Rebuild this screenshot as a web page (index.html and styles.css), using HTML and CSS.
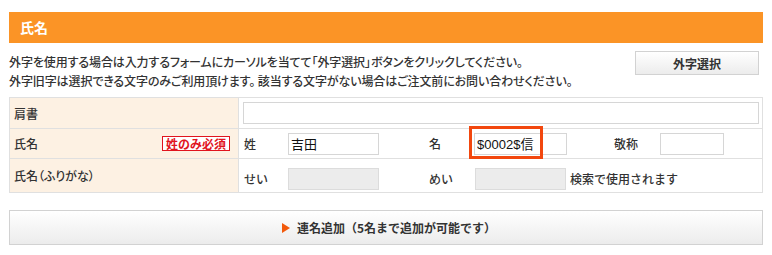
FILE: index.html
```html
<!DOCTYPE html>
<html lang="ja">
<head>
<meta charset="utf-8">
<title>氏名</title>
<link rel="stylesheet" href="styles.css">
</head>
<body>
<div class="page">
  <h2 class="section-title">氏名</h2>
  <div class="intro">
    <p class="intro-text">外字を使用する場合は入力するフォームにカーソルを当てて「外字選択」ボタンをクリックしてください。<br>外字旧字は選択できる文字のみご利用頂けます。 該当する文字がない場合はご注文前にお問い合わせください。</p>
    <button class="btn btn-gaiji" type="button">外字選択</button>
  </div>
  <div class="form">
    <div class="label">肩書</div>
    <div class="cell cell-title"><input class="field field-wide" type="text"></div>

    <div class="label label-name">氏名<span class="badge">姓のみ必須</span></div>
    <div class="cell cell-grid">
      <span class="sub">姓</span>
      <span class="slot"><input class="field field-m" type="text" value="吉田"></span>
      <span class="sub">名</span>
      <span class="slot"><span class="mark-wrap"><input class="field field-m2" type="text" value="$0002$信"><span class="mark"></span></span></span>
      <span class="sub">敬称</span>
      <span class="slot"><input class="field field-s" type="text"></span>
    </div>

    <div class="label label-kana">氏名（ふりがな）</div>
    <div class="cell cell-grid cell-kana">
      <span class="sub">せい</span>
      <span class="slot"><input class="field field-m field-off" type="text" disabled></span>
      <span class="sub">めい</span>
      <span class="slot slot-wide"><input class="field field-m field-off field-mei" type="text" disabled><span class="note">検索で使用されます</span></span>
    </div>
  </div>
  <button class="btn btn-add" type="button"><span class="tri"></span>連名追加（5名まで追加が可能です）</button>
</div>
</body>
</html>
```
FILE: styles.css
```css
* { box-sizing: border-box; }
html, body { margin: 0; padding: 0; background: #fff; }
body {
  font-family: "Noto Sans CJK JP", "Noto Sans", sans-serif;
  color: #333;
  font-size: 12px;
}
.page {
  width: 754px;
  margin-left: 9px;
  padding-top: 12px;
}
.section-title {
  margin: 0;
  height: 31px;
  line-height: 31px;
  background: #fb9426;
  color: #fff;
  font-size: 14px;
  font-weight: bold;
  padding-left: 11px;
}
.intro {
  display: flex;
  justify-content: space-between;
  align-items: flex-start;
  padding-top: 9px;
  height: 54px;
}
.intro-text {
  margin: 0;
  line-height: 19px;
  font-size: 12px;
  font-weight: 500;
  color: #333;
  font-feature-settings: "palt";
  letter-spacing: -0.1px;
}
.btn {
  font-family: "Noto Sans CJK JP", "Noto Sans", sans-serif;
  font-weight: bold;
  color: #333;
  background: linear-gradient(#ffffff, #ececec);
  border: 1px solid #d2d2d2;
  cursor: pointer;
}
.btn-gaiji {
  width: 124px;
  height: 24px;
  margin-top: -1px;
  margin-right: 4px;
  font-size: 12px;
  padding: 0;
}
.form {
  display: grid;
  grid-template-columns: 229px 1fr;
  grid-template-rows: 31px 30px 34px;
  border: 1px solid #e0e0e0;
  border-bottom: none;
}
.label {
  background: #fdf1e3;
  border-right: 1px solid #e0e0e0;
  border-bottom: 1px solid #e0e0e0;
  padding: 0 8px 0 4px;
  display: flex;
  align-items: center;
  font-weight: 500;
  font-size: 12px;
  color: #333;
  font-feature-settings: "palt";
}
.label-name { justify-content: space-between; }
.badge {
  color: #e1141e;
  border: 1px solid #e1141e;
  background: #fff;
  font-size: 12px;
  height: 15px;
  line-height: 13px;
  padding: 0 3px;
  font-weight: bold;
  font-feature-settings: normal;
}
.cell {
  border-bottom: 1px solid #e0e0e0;
  display: flex;
  align-items: center;
}
.cell-title { padding: 0 4px; }
.cell-grid {
  display: grid;
  grid-template-columns: 45px 140px 45px 140px 47px 64px;
  align-items: center;
  padding-left: 5px;
}
.cell-kana { padding-top: 6px; }
.sub {
  font-weight: 500;
  font-size: 12px;
  color: #333;
}
.slot { display: flex; align-items: center; }
.slot-wide { grid-column: span 3; }
.field {
  height: 22px;
  border: 1px solid #d6d6d6;
  background: #fff;
  font-family: "Liberation Sans", "Noto Sans CJK JP", sans-serif;
  font-size: 13px;
  color: #111;
  padding: 0 2px;
  margin: 0;
  outline: none;
}
.field-wide { width: 516px; }
.field-m { width: 91px; margin-left: -1px; }
.field-m2 { width: 93px; }
.field-mei { margin-left: 1px; }
.field-s { width: 64px; margin-left: -1px; }
.field-off { background: #ececec; border-color: #dcdcdc; }
.mark-wrap { position: relative; display: inline-block; line-height: 0; }
.mark {
  position: absolute;
  left: -5px;
  top: -7px;
  width: 74px;
  height: 33px;
  border: 3px solid #f2470e;
  pointer-events: none;
}
.note {
  margin-left: 4px;
  font-weight: 500;
  font-size: 12px;
  color: #333;
}
.btn-add {
  display: flex;
  align-items: center;
  justify-content: center;
  width: 754px;
  height: 35px;
  margin-top: 17px;
  font-size: 12px;
  padding: 0 0 0 6px;
}
.tri {
  width: 0;
  height: 0;
  border-top: 5.5px solid transparent;
  border-bottom: 5.5px solid transparent;
  border-left: 8px solid #f25a0c;
  margin-right: 7px;
}
```
